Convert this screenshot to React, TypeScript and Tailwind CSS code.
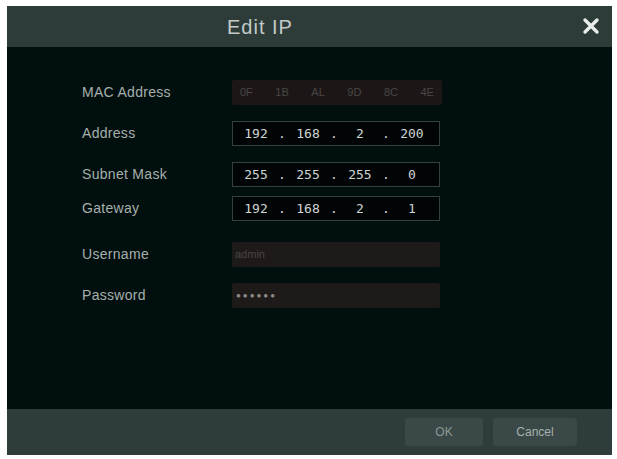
import React from "react";

const font = { fontFamily: '"Liberation Sans", Arial, sans-serif' };
const mono = { fontFamily: '"DejaVu Sans Mono", "Liberation Mono", monospace' };

const IpField = ({ parts }: { parts: string[] }) => (
  <div
    className="flex h-[25px] w-[208px] items-center justify-between border border-[#34423f] bg-[#020506] pr-[10px] pl-[6px] text-[13px] text-[#cfd5d3]"
    style={mono}
  >
    {parts.map((p, i) => (
      <React.Fragment key={i}>
        <span className="w-[34px] text-center">{p}</span>
        {i < parts.length - 1 && <span>.</span>}
      </React.Fragment>
    ))}
  </div>
);

const Row = ({ label, mt, children }: { label: string; mt: string; children: React.ReactNode }) => (
  <div className={`flex items-center ${mt}`}>
    <div className="w-[225px] pl-[75px] text-[14px] tracking-[0.3px] whitespace-nowrap text-[#a6afac]">{label}</div>
    {children}
  </div>
);

const App = () => {
  const mac = ["0F", "1B", "AL", "9D", "8C", "4E"];
  return (
    <div className="h-[459px] w-[617px] bg-white pt-[6px] pl-[7px]" style={font}>
      <div className="flex h-[449px] w-[605px] flex-col bg-[#020f0f]">
        {/* header */}
        <div className="relative flex h-[41px] items-center bg-[#2d3c39] pl-[220px]">
          <span className="text-[20px] tracking-[1px] text-[#c3cac8]">Edit IP</span>
          <svg className="absolute top-[11px] right-[12px]" width="18" height="18" viewBox="0 0 18 18">
            <path d="M3 3 L15 15 M15 3 L3 15" stroke="#e8ecea" strokeWidth="3.4" strokeLinecap="round" />
          </svg>
        </div>

        {/* body */}
        <div className="flex flex-1 flex-col">
          <Row label="MAC Address" mt="mt-[33px]">
            <div className="flex h-[25px] w-[210px] items-center justify-between rounded-[2px] bg-[#1c1716] px-[8px] text-[11px] text-[#4a4646]">
              {mac.map((m) => (
                <span key={m}>{m}</span>
              ))}
            </div>
          </Row>
          <Row label="Address" mt="mt-[16px]">
            <IpField parts={["192", "168", "2", "200"]} />
          </Row>
          <Row label="Subnet Mask" mt="mt-[16px]">
            <IpField parts={["255", "255", "255", "0"]} />
          </Row>
          <Row label="Gateway" mt="mt-[9px]">
            <IpField parts={["192", "168", "2", "1"]} />
          </Row>
          <Row label="Username" mt="mt-[21px]">
            <div className="flex h-[25px] w-[208px] items-center rounded-[2px] bg-[#1e1a19] px-[3px] text-[11px] text-[#4b4443]">
              admin
            </div>
          </Row>
          <Row label="Password" mt="mt-[16px]">
            <div className="flex h-[25px] w-[208px] items-center rounded-[2px] bg-[#1e1a19] px-[4px] text-[8px] tracking-[2px] text-[#8c8a88]">
              ●●●●●●
            </div>
          </Row>
        </div>

        {/* footer */}
        <div className="flex h-[46px] items-center justify-end gap-[10px] bg-[#2e3d3b] pr-[35px]">
          <button className="h-[28px] w-[78px] rounded-[3px] bg-[#3a4947] text-[12px] text-[#8d9896]">OK</button>
          <button className="h-[28px] w-[84px] rounded-[3px] bg-[#3a4947] text-[12px] text-[#a7b0ae]">Cancel</button>
        </div>
      </div>
    </div>
  );
};

export default App;
